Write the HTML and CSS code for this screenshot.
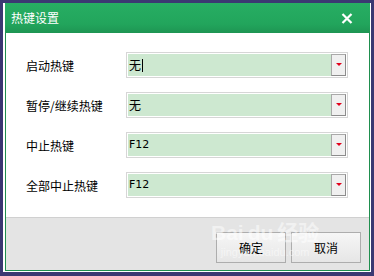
FILE: index.html
```html
<!DOCTYPE html>
<html lang="zh-CN">
<head>
  <meta charset="UTF-8">
  <title>热键设置</title>
  <link rel="stylesheet" href="styles.css">
</head>
<body>
  <div class="frame">
    <div class="window">
      <div class="titlebar">
        <span class="title">热键设置</span>
        <svg class="close" width="12" height="11" viewBox="0 0 12 11">
          <path d="M1.5 1 L10.5 10 M10.5 1 L1.5 10" stroke="#fff" stroke-width="2.2" fill="none"/>
        </svg>
      </div>

      <div class="content">
        <div class="row">
          <span class="label">启动热键</span>
          <div class="combo">
            <span class="value">无<span class="caret"></span></span>
            <span class="drop"><span class="arrow"></span></span>
          </div>
        </div>
        <div class="row">
          <span class="label">暂停/继续热键</span>
          <div class="combo">
            <span class="value">无</span>
            <span class="drop"><span class="arrow"></span></span>
          </div>
        </div>
        <div class="row">
          <span class="label">中止热键</span>
          <div class="combo">
            <span class="value latin">F12</span>
            <span class="drop"><span class="arrow"></span></span>
          </div>
        </div>
        <div class="row">
          <span class="label">全部中止热键</span>
          <div class="combo">
            <span class="value latin">F12</span>
            <span class="drop"><span class="arrow"></span></span>
          </div>
        </div>
      </div>

      <div class="footer">
        <button class="btn">确定</button>
        <button class="btn">取消</button>
        <div class="watermark">
          <span class="wm-big">Bai<b>du</b>经验</span>
          <span class="wm-small">jingyan.baidu.com</span>
        </div>
      </div>
    </div>
  </div>
</body>
</html>
```

FILE: styles.css
```css
body {
  margin: 0;
  width: 374px;
  height: 276px;
  background-color: #3b3872;
  font-family: "Noto Sans CJK SC", "Liberation Sans", sans-serif;
  font-size: 12px;
  overflow: hidden;
}

.frame {
  margin: 3px 0 0 3px;
  width: 365px;
  height: 268px;
  background-color: #fff;
  padding: 0 1px 1px 2px;
}

.window {
  width: 363px;
  height: 267px;
  border: 1px solid #1f8f4e;
  border-top: none;
  display: flex;
  flex-direction: column;
  background-color: #fff;
}

.titlebar {
  height: 30px;
  margin: 0 -1px;
  background: linear-gradient(#27ae63, #22a55c 70%, #1e9553);
  display: flex;
  align-items: center;
  justify-content: space-between;
  padding: 0 17px 0 6px;
  flex-shrink: 0;
}

.title {
  color: #fff;
  font-size: 12px;
  line-height: 16px;
}

.close {
  display: block;
  margin-top: 1px;
}

.content {
  height: 164px;
  padding: 20px 0 0 20px;
  display: flex;
  flex-direction: column;
  gap: 16px;
}

.row {
  display: flex;
  align-items: center;
  height: 24px;
}

.label {
  width: 100px;
  color: #000;
  font-size: 12px;
}

.combo {
  width: 218px;
  height: 22px;
  border: 1px solid #d6d6d6;
  display: flex;
  align-items: stretch;
  padding: 1px;
  background-color: #fff;
}

.value {
  flex: 1;
  background-color: #cde8d0;
  padding-left: 1px;
  line-height: 20px;
  color: #000;
  display: flex;
  align-items: center;
}

.value.latin {
  font-family: "DejaVu Sans", sans-serif;
  font-size: 11px;
}

.caret {
  display: inline-block;
  width: 1px;
  height: 13px;
  background-color: #000;
  margin-left: 1px;
}

.drop {
  width: 13px;
  border: 1px solid #8c8c8c;
  border-top-color: #a9a9a9;
  border-left-color: #a9a9a9;
  background-color: #f0f0f0;
  display: flex;
  align-items: center;
  justify-content: center;
}

.arrow {
  width: 0;
  height: 0;
  border-left: 3px solid transparent;
  border-right: 3px solid transparent;
  border-top: 3px solid #e2001a;
  margin-top: -2px;
}

.footer {
  flex: 1;
  position: relative;
  background-color: #e4e4e4;
  border-top: 1px solid #d0d0d0;
  display: flex;
  justify-content: flex-end;
  align-items: flex-start;
  gap: 5px;
  padding: 14px 8px 0 0;
}

.btn {
  width: 70px;
  height: 31px;
  border: 1px solid #adadad;
  background: linear-gradient(#f6f6f6, #e6e6e6);
  font-family: "Noto Sans CJK SC", sans-serif;
  font-size: 12px;
  color: #000;
  padding: 0;
}

.watermark {
  position: absolute;
  left: 205px;
  top: 2px;
  display: flex;
  flex-direction: column;
  align-items: center;
  color: rgba(255, 255, 255, 0.5);
  pointer-events: none;
}

.wm-big {
  font-family: "Liberation Sans", "Noto Sans CJK SC", sans-serif;
  font-size: 21px;
  font-weight: bold;
  line-height: 26px;
}

.wm-big b {
  margin: 0 4px;
}

.wm-small {
  font-family: "Liberation Sans", sans-serif;
  font-size: 11px;
  line-height: 12px;
}
```
